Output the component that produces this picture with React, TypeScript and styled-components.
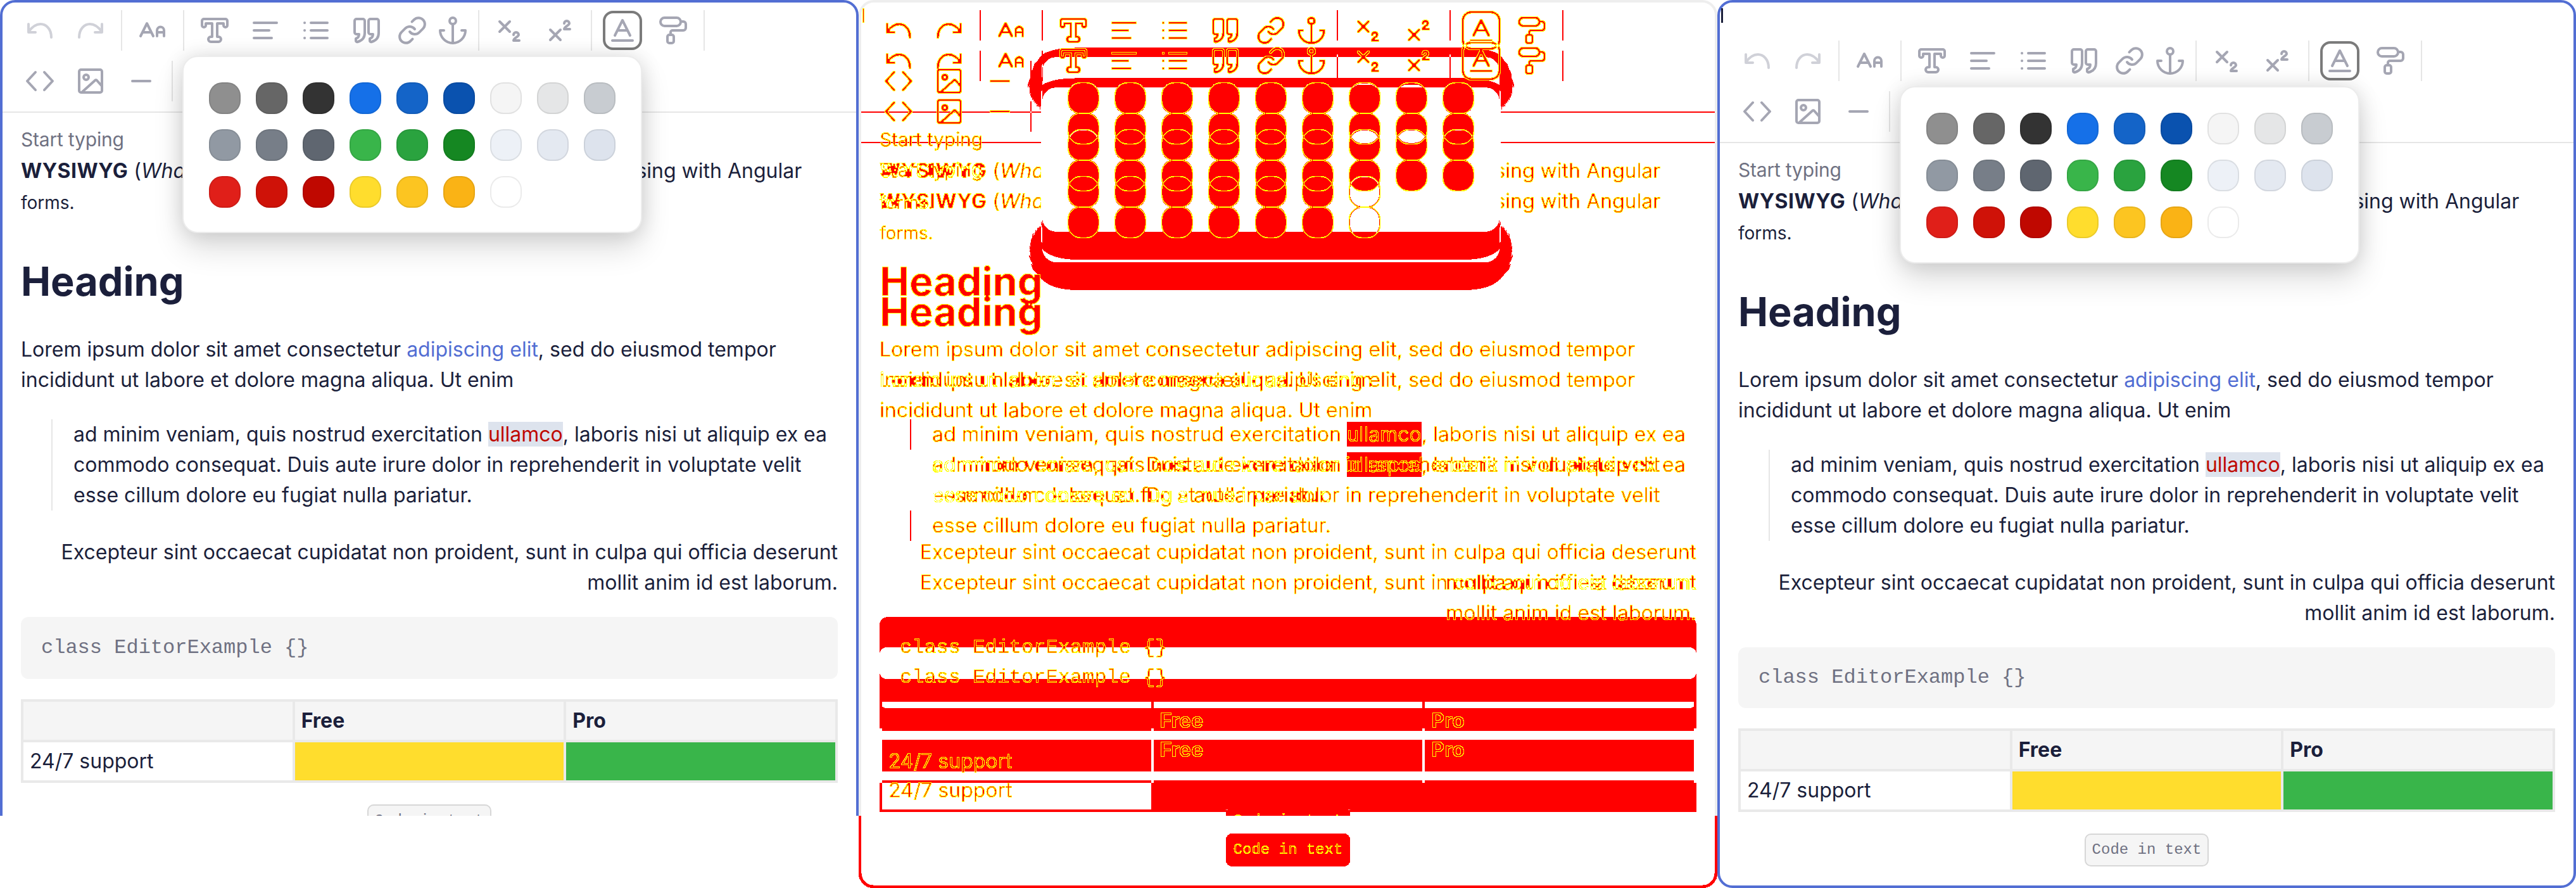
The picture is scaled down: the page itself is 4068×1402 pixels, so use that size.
import React from 'react';
import styled, { createGlobalStyle, css } from 'styled-components';

type Skin = 'plain' | 'shapes' | 'glyphs';

const GlobalStyle = createGlobalStyle`
  html, body { margin: 0; padding: 0; background: #fff; }
  body { font-family: Inter, "Noto Sans", sans-serif; }
  * { box-sizing: border-box; }
`;

// the diff panel paints the same editor with the colours split in two sets
const skins = {
  plain: css`
    --ink: #1b1f3b;
    --ink-soft: #6f7182;
    --link: #526ed3;
    --mark-ink: #bf0800;
    --mark-bg: #dde3ed;
    --code-ink: #6f7182;
    --icon: #a5a6b3;
    --icon-off: #d0d1d8;
    --active: #7b7b7b;
    --card: #526ed3;
    --rule: #e6e6e6;
    --code-bg: #f5f5f5;
    --pill-line: #d7d7d7;
    --cell-line: #e9e9e9;
    --free: #ffdd2d;
    --pro: #39b54a;
    --pop-line: #ececec;
    --pop-bg: #fff;
    --pop-shadow: 0 24px 48px rgba(0, 0, 0, 0.14), 0 0 32px rgba(0, 0, 0, 0.12);
    --swatch-line: rgba(0, 0, 0, 0.08);
    --swatch-width: 2px;
  `,
  shapes: css`
    --ink: transparent;
    --ink-soft: transparent;
    --link: transparent;
    --mark-ink: transparent;
    --mark-bg: #dde3ed;
    --code-ink: transparent;
    --icon: transparent;
    --icon-off: transparent;
    --active: transparent;
    --card: #526ed3;
    --rule: #e6e6e6;
    --code-bg: #f5f5f5;
    --pill-line: #d7d7d7;
    --cell-line: #e9e9e9;
    --free: #ffdd2d;
    --pro: #39b54a;
    --pop-line: #ececec;
    --pop-bg: #fff;
    --pop-shadow: 0 24px 48px rgba(0, 0, 0, 0.14), 0 0 32px rgba(0, 0, 0, 0.12);
    --swatch-line: rgba(0, 0, 0, 0.08);
    --swatch-width: 2px;
  `,
  glyphs: css`
    --ink: #000;
    --ink-soft: #000;
    --link: #000;
    --mark-ink: #000;
    --mark-bg: transparent;
    --code-ink: #000;
    --icon: #000;
    --icon-off: #000;
    --active: #000;
    --card: transparent;
    --rule: transparent;
    --code-bg: transparent;
    --pill-line: transparent;
    --cell-line: transparent;
    --free: transparent;
    --pro: transparent;
    --pop-line: transparent;
    --pop-bg: #fff;
    --pop-shadow: none;
    --swatch-line: #000;
    --swatch-width: 1px;
  `,
};

const Page = styled.div`
  display: grid;
  grid-template-columns: repeat(3, 1356px);
  width: 4068px;
  height: 1402px;
  overflow: hidden;
`;

const Frame = styled.div<{ $skin: Skin }>`
  ${({ $skin }) => skins[$skin]}
  position: relative;
  isolation: isolate;
  width: 1356px;
  height: 1402px;
  background: #fff;
  overflow: hidden;
`;

const Clip = styled.div<{ $short: boolean }>`
  height: ${({ $short }) => ($short ? '1288px' : '1402px')};
  overflow: hidden;
`;

const Card = styled.div`
  position: relative;
  height: 1402px;
  border: 4px solid var(--card);
  border-radius: 24px;
  color: var(--ink);
  font-size: 32px;
  line-height: 48px;
`;

const StrayMark = styled.span`
  position: absolute;
  left: 2px;
  top: 9px;
  width: 3px;
  height: 23px;
  background: var(--ink);
`;

const Tools = styled.div<{ $lead: number }>`
  position: relative;
  padding: ${({ $lead }) => $lead + 12}px 19px 16px;
  border-bottom: 2px solid var(--rule);
`;

const ToolRow = styled.div`
  display: flex;
  align-items: center;
  height: 64px;
  & + & {
    margin-top: 16px;
  }
`;

const Tool = styled.div<{ $narrow?: boolean }>`
  display: flex;
  align-items: center;
  justify-content: center;
  width: ${({ $narrow }) => ($narrow ? '64px' : '80px')};
  height: 64px;
`;

const ActiveBox = styled.div`
  display: flex;
  align-items: center;
  justify-content: center;
  width: 62px;
  height: 62px;
  border: 4px solid var(--active);
  border-radius: 16px;
`;

const Divider = styled.div`
  width: 2px;
  height: 64px;
  margin: 0 8px;
  background: var(--rule);
`;

const Icon = styled.svg<{ $off?: boolean }>`
  display: block;
  fill: none;
  stroke: ${({ $off }) => ($off ? 'var(--icon-off)' : 'var(--icon)')};
  stroke-width: 4;
  stroke-linecap: round;
  stroke-linejoin: round;
  overflow: visible;
`;

const Popup = styled.div`
  position: absolute;
  left: 284px;
  width: 726px;
  height: 280px;
  padding: 40px;
  border: 2px solid var(--pop-line);
  border-radius: 24px;
  background: var(--pop-bg);
  box-shadow: var(--pop-shadow);
  display: grid;
  grid-template-columns: repeat(9, 50px);
  grid-auto-rows: 50px;
  gap: 24px;
  z-index: 2;
`;

const Swatch = styled.div<{ $color: string; $skin: Skin }>`
  border-radius: 21px;
  border: var(--swatch-width) solid var(--swatch-line);
  background: ${({ $color, $skin }) => ($skin === 'glyphs' ? 'transparent' : $color)};
`;

const Content = styled.div`
  padding: 18px 29px 0;
`;

const Line = styled.div<{ $soft?: boolean }>`
  color: ${({ $soft }) => ($soft ? 'var(--ink-soft)' : 'var(--ink)')};
  font-size: ${({ $soft }) => ($soft ? '30px' : '32px')};
  letter-spacing: ${({ $soft }) => ($soft ? '-0.2px' : '0')};
  margin-bottom: 2px;
  white-space: nowrap;
`;

const Strong = styled.b`
  letter-spacing: 0.5px;
`;

const Tight = styled.span`
  letter-spacing: -1px;
`;

const Small = styled.div`
  font-size: 28px;
`;

const Heading = styled.h1`
  margin: 64px 0 48px;
  font-size: 63px;
  line-height: 72px;
  font-weight: 700;
`;

const Para = styled.p`
  margin: 0;
`;

const Link = styled.span`
  color: var(--link);
`;

const Quote = styled.blockquote`
  margin: 38px 0 42px 48px;
  padding-left: 33px;
  border-left: 2px solid var(--rule);
`;

const Marked = styled.span`
  color: var(--mark-ink);
  background: var(--mark-bg);
`;

const RightPara = styled.p`
  margin: 0 0 30px;
  text-align: right;
`;

const CodeBlock = styled.pre<{ $tight: boolean }>`
  display: flex;
  align-items: center;
  height: ${({ $tight }) => ($tight ? '96px' : '98px')};
  margin: 0 0 32px;
  padding: 0 32px;
  border-radius: 12px;
  background: var(--code-bg);
  color: var(--code-ink);
  font: 32px/48px "Liberation Mono", monospace;
`;

const Table = styled.table`
  width: 100%;
  border-collapse: collapse;
  table-layout: fixed;
  border: 4px solid var(--cell-line);
`;

const HeadCell = styled.th`
  height: 64px;
  padding: 0 10px;
  border: 4px solid var(--cell-line);
  background: var(--code-bg);
  color: var(--ink);
  font-size: 32px;
  font-weight: 700;
  text-align: left;
`;

const Cell = styled.td<{ $fill?: string }>`
  height: 64px;
  padding: 0 10px;
  border: 4px solid var(--cell-line);
  background: ${({ $fill }) => $fill || 'transparent'};
`;

const PillRow = styled.div`
  display: flex;
  justify-content: center;
  margin-top: 34px;
`;

const Pill = styled.code`
  height: 52px;
  padding: 0 10px;
  border: 2px solid var(--pill-line);
  border-radius: 10px;
  background: var(--code-bg);
  color: var(--code-ink);
  font: 24px/48px "Liberation Mono", monospace;
`;

const DiffRim = styled.div`
  height: 1402px;
  border: 4px solid #eee;
  border-radius: 24px;
`;

const DiffLayer = styled.div<{ $filter: string }>`
  position: absolute;
  inset: 0;
  isolation: isolate;
  filter: url(#${({ $filter }) => $filter});
`;

const DiffCopy = styled.div`
  position: absolute;
  inset: 0;
  & + & {
    mix-blend-mode: difference;
  }
`;

const FilterDefs = styled.svg`
  position: absolute;
  width: 0;
  height: 0;
`;

const SWATCHES = [
  '#8f8f8f', '#666666', '#333333', '#1570e8', '#1464c8', '#0a52af', '#f5f5f5', '#e5e6e7', '#c8ccd1',
  '#9199a3', '#777e88', '#5f6670', '#39b54a', '#2aa33f', '#158722', '#edf1f7', '#e4e9f1', '#dde3ed',
  '#e01f19', '#cf1208', '#bf0800', '#ffdd2d', '#fcc521', '#fab315', '#ffffff',
];

function ToolbarIcons() {
  return (
    <>
      <ToolRow>
        <Tool>
          <Icon $off width="40" height="40" viewBox="0 0 40 40">
            <path d="M2 10V23H13M2 22C8 14 14 10 21 10C30 10 38 18 38 31" />
          </Icon>
        </Tool>
        <Tool>
          <Icon $off width="40" height="40" viewBox="0 0 40 40">
            <path d="M38 10V23H27M38 22C32 14 26 10 19 10C10 10 2 18 2 31" />
          </Icon>
        </Tool>
        <Divider />
        <Tool>
          <Icon width="40" height="40" viewBox="0 0 40 40">
            <path d="M1 29L11 9L21 29M4 23H18" />
            <path d="M27 29V20a5 5 0 0 1 11 0V29M27 23H38" />
          </Icon>
        </Tool>
        <Divider />
        <Tool>
          <Icon width="44" height="40" viewBox="0 0 44 40">
            <path d="M5 2H39a3 3 0 0 1 3 3V12a3 3 0 0 1-6 0V9H26V30H28a4 4 0 0 1 0 8H16a4 4 0 0 1 0-8H18V9H8V12a3 3 0 0 1-6 0V5a3 3 0 0 1 3-3Z" />
          </Icon>
        </Tool>
        <Tool>
          <Icon width="40" height="40" viewBox="0 0 40 40">
            <path d="M2 8H38M2 20H26M2 32H30" />
          </Icon>
        </Tool>
        <Tool>
          <Icon width="40" height="40" viewBox="0 0 40 40">
            <path d="M2 8H2.1M2 20H2.1M2 32H2.1M12 8H38M12 20H38M12 32H38" />
          </Icon>
        </Tool>
        <Tool>
          <Icon width="42" height="40" viewBox="0 0 42 40">
            <path d="M5 2H15a3 3 0 0 1 3 3V24C18 31 14 36 7 38a2 2 0 0 1-3-2V33C7 32 9 30 9 26H5a3 3 0 0 1-3-3V5a3 3 0 0 1 3-3Z" />
            <path d="M27 2H37a3 3 0 0 1 3 3V24C40 31 36 36 29 38a2 2 0 0 1-3-2V33C29 32 31 30 31 26H27a3 3 0 0 1-3-3V5a3 3 0 0 1 3-3Z" />
          </Icon>
        </Tool>
        <Tool $narrow>
          <Icon width="48" height="48" viewBox="0 0 24 24" style={{ strokeWidth: 2 }}>
            <path d="M10 13a5 5 0 0 0 7.54.54l3-3a5 5 0 0 0-7.07-7.07l-1.72 1.71" />
            <path d="M14 11a5 5 0 0 0-7.54-.54l-3 3a5 5 0 0 0 7.07 7.07l1.71-1.71" />
          </Icon>
        </Tool>
        <Tool $narrow>
          <Icon width="44" height="44" viewBox="0 0 44 44">
            <circle cx="22" cy="7" r="5" />
            <path d="M22 12V41M2 22H8M36 22H42M2 22a20 20 0 0 0 40 0" />
          </Icon>
        </Tool>
        <Divider />
        <Tool>
          <Icon width="40" height="36" viewBox="0 0 40 36">
            <path d="M4 4L20 20M20 4L4 20" />
            <path d="M26 25a4 4 0 0 1 8 0c0 3-8 5-8 9H35" />
          </Icon>
        </Tool>
        <Tool>
          <Icon width="40" height="34" viewBox="0 0 40 34">
            <path d="M4 16L20 32M20 16L4 32" />
            <path d="M26 6a4 4 0 0 1 8 0c0 3-8 5-8 9H35" />
          </Icon>
        </Tool>
        <Divider />
        <Tool>
          <ActiveBox>
            <Icon width="36" height="36" viewBox="0 0 36 36">
              <path d="M6 26L18 2L30 26M10 18H26M2 34H34" />
            </Icon>
          </ActiveBox>
        </Tool>
        <Tool>
          <Icon width="44" height="44" viewBox="0 0 44 44">
            <rect x="2" y="2" width="32" height="13" rx="6.5" />
            <path d="M34 8H38a4 4 0 0 1 4 4V18a4 4 0 0 1-4 4H21a3 3 0 0 0-3 3V29" />
            <rect x="13" y="29" width="10" height="13" rx="3" />
          </Icon>
        </Tool>
        <Divider />
      </ToolRow>
      <ToolRow>
        <Tool>
          <Icon width="44" height="40" viewBox="0 0 44 40">
            <path d="M15 6L2 20L15 34M29 6L42 20L29 34" />
          </Icon>
        </Tool>
        <Tool>
          <Icon width="40" height="40" viewBox="0 0 40 40">
            <rect x="2" y="2" width="36" height="36" rx="3" />
            <circle cx="13" cy="14" r="4" />
            <path d="M7 37L27 19a2 2 0 0 1 3 0L38 28" />
          </Icon>
        </Tool>
        <Tool>
          <Icon width="32" height="8" viewBox="0 0 32 8">
            <path d="M2 4H30" />
          </Icon>
        </Tool>
        <Divider />
      </ToolRow>
    </>
  );
}

function Editor({ skin, shifted }: { skin: Skin; shifted: boolean }) {
  const lead = shifted ? 48 : 0;
  return (
    <Frame $skin={skin}>
      <Clip $short={!shifted}>
        <Card>
          {shifted && <StrayMark />}
          <Tools $lead={lead}>
            <ToolbarIcons />
            <Popup style={{ top: lead + 84 }}>
              {SWATCHES.map((color) => (
                <Swatch key={color} $color={color} $skin={skin} />
              ))}
            </Popup>
          </Tools>
          <Content>
            <Line $soft>Start typing</Line>
            <Line>
              <Strong>WYSIWYG</Strong> (<i>What You See Is What You Get</i>) <Tight>Rich Text Editor for</Tight> using
              with Angular
            </Line>
            <Small>forms.</Small>
            <Heading>Heading</Heading>
            <Para>
              Lorem ipsum dolor sit amet consectetur <Link>adipiscing elit</Link>, sed do eiusmod tempor incididunt ut
              labore et dolore magna aliqua. Ut enim
            </Para>
            <Quote>
              ad minim veniam, quis nostrud exercitation <Marked>ullamco</Marked>, laboris nisi ut aliquip ex ea
              commodo consequat. Duis aute irure dolor in reprehenderit in voluptate velit esse cillum dolore eu
              fugiat nulla pariatur.
            </Quote>
            <RightPara>
              Excepteur sint occaecat cupidatat non proident, sunt in culpa qui officia deserunt mollit anim id est
              laborum.
            </RightPara>
            <CodeBlock $tight={shifted}>class EditorExample {'{}'}</CodeBlock>
            <Table>
              <tbody>
                <tr>
                  <HeadCell />
                  <HeadCell>Free</HeadCell>
                  <HeadCell>Pro</HeadCell>
                </tr>
                <tr>
                  <Cell>24/7 support</Cell>
                  <Cell $fill="var(--free)" />
                  <Cell $fill="var(--pro)" />
                </tr>
              </tbody>
            </Table>
            <PillRow>
              <Pill>Code in text</Pill>
            </PillRow>
          </Content>
        </Card>
      </Clip>
    </Frame>
  );
}

function DiffPanel() {
  return (
    <Frame $skin="plain">
      <FilterDefs aria-hidden="true">
        <defs>
          <filter id="diffShapes" x="0" y="0" width="1" height="1" colorInterpolationFilters="sRGB">
            <feColorMatrix values="0 0 0 0 1  0 0 0 0 0  0 0 0 0 0  6 6 6 0 0" />
            <feComponentTransfer>
              <feFuncA type="discrete" tableValues="0 1" />
            </feComponentTransfer>
          </filter>
          <filter id="diffGlyphs" x="0" y="0" width="1" height="1" colorInterpolationFilters="sRGB">
            <feColorMatrix values="0 0 0 0 1  0 0 0 0 1  0 0 0 0 0  2.5 2.5 2.5 0 0" />
            <feComponentTransfer result="edge">
              <feFuncA type="discrete" tableValues="0 1" />
            </feComponentTransfer>
            <feMorphology in="edge" operator="erode" radius="1" result="core" />
            <feFlood floodColor="#ff0000" />
            <feComposite in2="core" operator="in" result="redCore" />
            <feMerge>
              <feMergeNode in="edge" />
              <feMergeNode in="redCore" />
            </feMerge>
          </filter>
        </defs>
      </FilterDefs>
      <DiffRim />
      {(['shapes', 'glyphs'] as const).map((skin) => (
        <DiffLayer key={skin} $filter={skin === 'shapes' ? 'diffShapes' : 'diffGlyphs'}>
          <DiffCopy>
            <Editor skin={skin} shifted={false} />
          </DiffCopy>
          <DiffCopy>
            <Editor skin={skin} shifted />
          </DiffCopy>
        </DiffLayer>
      ))}
    </Frame>
  );
}

export default function App() {
  return (
    <Page>
      <GlobalStyle />
      <Editor skin="plain" shifted={false} />
      <DiffPanel />
      <Editor skin="plain" shifted />
    </Page>
  );
}
